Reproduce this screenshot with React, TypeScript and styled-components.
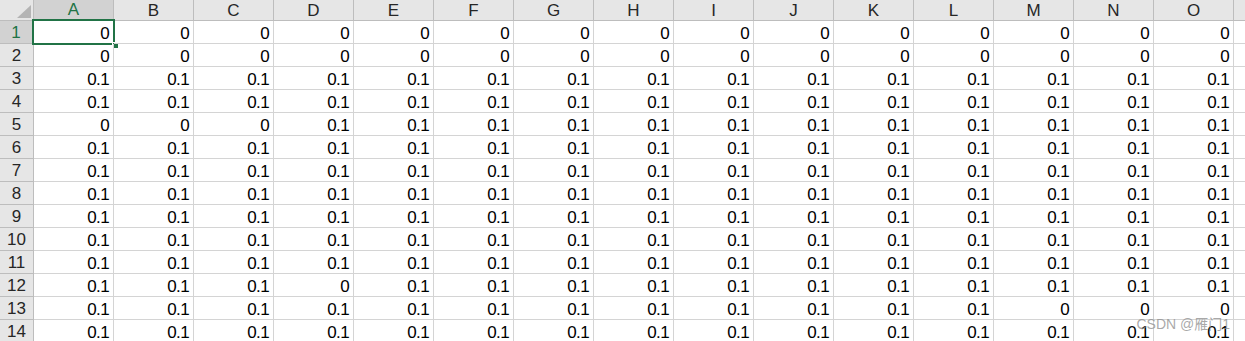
import React from "react";
import styled, { createGlobalStyle } from "styled-components";

const GlobalStyle = createGlobalStyle`
  html, body {
    margin: 0;
    padding: 0;
    background: #ffffff;
    overflow: hidden;
  }
`;

const COLS = ["A", "B", "C", "D", "E", "F", "G", "H", "I", "J", "K", "L", "M", "N", "O", ""];
const ROWS = Array.from({ length: 14 }, (_, i) => i + 1);

// cells that hold 0 where the rest of the row holds 0.1
const zeroCells: Record<number, number[]> = {
  5: [0, 1, 2],
  12: [3],
  13: [12, 13, 14],
};

const valueFor = (row: number, col: number) => {
  if (row <= 2) return "0";
  if (zeroCells[row]?.includes(col)) return "0";
  return "0.1";
};

const Sheet = styled.div`
  position: relative;
  width: 1245px;
  height: 341px;
  overflow: hidden;
  display: grid;
  grid-template-columns: 34px repeat(16, 80px);
  grid-template-rows: 21px repeat(14, 23px);
  font-family: "Liberation Sans", Arial, sans-serif;
`;

const Corner = styled.div`
  position: relative;
  box-sizing: border-box;
  background: #e6e6e6;
  border-right: 1px solid #bdbdbd;
  border-bottom: 1px solid #bdbdbd;

  &::after {
    content: "";
    position: absolute;
    right: 2px;
    bottom: 2px;
    width: 0;
    height: 0;
    border-left: 14px solid transparent;
    border-bottom: 13px solid #b4b4b4;
  }
`;

const ColHead = styled.div<{ $active?: boolean }>`
  box-sizing: border-box;
  display: flex;
  align-items: center;
  justify-content: center;
  font-size: 17px;
  line-height: 1;
  background: ${(p) => (p.$active ? "#d2d2d2" : "#e6e6e6")};
  color: ${(p) => (p.$active ? "#217346" : "#262626")};
  border-right: 1px solid #bdbdbd;
  border-bottom: ${(p) => (p.$active ? "2px solid #217346" : "1px solid #bdbdbd")};
`;

const RowHead = styled.div<{ $active?: boolean }>`
  box-sizing: border-box;
  display: flex;
  align-items: center;
  justify-content: center;
  padding-top: 1px;
  font-size: 17px;
  line-height: 1;
  background: ${(p) => (p.$active ? "#d2d2d2" : "#e6e6e6")};
  color: ${(p) => (p.$active ? "#217346" : "#262626")};
  border-right: ${(p) => (p.$active ? "2px solid #217346" : "1px solid #bdbdbd")};
  border-bottom: 1px solid #bdbdbd;
`;

const Cell = styled.div`
  position: relative;
  box-sizing: border-box;
  display: flex;
  align-items: flex-end;
  justify-content: flex-end;
  padding: 0 4px 1px 0;
  font-size: 17px;
  letter-spacing: -0.6px;
  line-height: 1;
  color: #000000;
  border-right: 1px solid #d4d4d4;
  border-bottom: 1px solid #d4d4d4;
`;

const Selection = styled.div`
  position: absolute;
  inset: -2px;
  border: 2px solid #217346;
  pointer-events: none;

  &::after {
    content: "";
    position: absolute;
    right: -6px;
    bottom: -6px;
    width: 5px;
    height: 5px;
    background: #217346;
    border: 1px solid #ffffff;
  }
`;

const Watermark = styled.div`
  position: absolute;
  right: 15px;
  bottom: 8px;
  font-family: "Liberation Sans", "Noto Sans CJK SC", sans-serif;
  font-size: 14px;
  color: rgba(140, 140, 140, 0.75);
  pointer-events: none;
`;

export default function App() {
  return (
    <>
      <GlobalStyle />
      <Sheet>
        <Corner />
        {COLS.map((c, i) => (
          <ColHead key={i} $active={i === 0}>
            {c}
          </ColHead>
        ))}
        {ROWS.map((r) => (
          <React.Fragment key={r}>
            <RowHead $active={r === 1}>{r}</RowHead>
            {COLS.map((c, ci) => (
              <Cell key={ci}>
                {c ? valueFor(r, ci) : ""}
                {r === 1 && ci === 0 && <Selection />}
              </Cell>
            ))}
          </React.Fragment>
        ))}
        <Watermark>CSDN @雁门1</Watermark>
      </Sheet>
    </>
  );
}
